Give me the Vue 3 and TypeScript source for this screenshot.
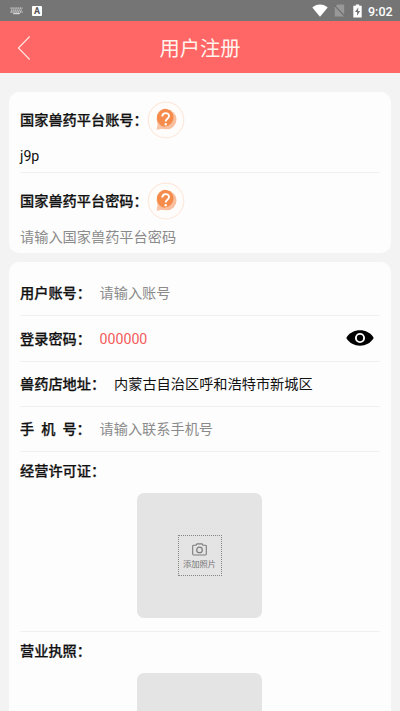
<script setup lang="ts">
import { ref } from 'vue'

interface PlatformField {
  label: string
  value: string
  placeholder: string
}

interface Upload {
  label: string
  prompt: string
}

const platformFields: PlatformField[] = [
  { label: '国家兽药平台账号：', value: 'j9p', placeholder: '' },
  { label: '国家兽药平台密码：', value: '', placeholder: '请输入国家兽药平台密码' },
]

const uploads: Upload[] = [
  { label: '经营许可证：', prompt: '添加照片' },
  { label: '营业执照：', prompt: '' },
]

const password = ref('000000')
const masked = ref(false)
</script>

<template>
  <div class="screen">
    <div class="status">
      <svg class="keyboard" viewBox="0 0 13 8">
        <path d="M0.5 1.2h12M1 3.1h11M0.5 5h12" stroke="#d2d2d2" stroke-width="1.3" stroke-dasharray="1.3 0.6" />
        <path d="M3.2 6.6h6.6" stroke="#d8d8d8" stroke-width="1.2" />
      </svg>
      <span class="ime">A</span>
      <svg class="wifi" viewBox="0 0 16 13">
        <path d="M0.3 3.4C4.5-.5 11.5-.5 15.7 3.4L8 12.8z" fill="#fff" />
      </svg>
      <svg class="sim" viewBox="0 0 11 13">
        <path d="M3.4 0.5H10.2V12.5H0.8V3.2z" fill="#989898" />
        <path d="M0.3 1.3L10.6 12" stroke="#6e6e6e" stroke-width="1.2" />
      </svg>
      <svg class="battery" viewBox="0 0 9 14">
        <path d="M2.8 0.4h3.4v1.3h2.5v11.8H0.3V1.7h2.5z" fill="#fff" />
        <path d="M5.4 3.3L2 8h2.1v3.7L7.1 7H5z" fill="#747474" />
      </svg>
      <span class="clock">9:02</span>
    </div>

    <header class="header">
      <svg class="back" viewBox="0 0 14 26">
        <path d="M12.7 1.5L1.4 13L12.7 24.5" fill="none" stroke="#ffe3df" stroke-width="1.2" />
      </svg>
      <h1 class="title">用户注册</h1>
    </header>

    <main class="content">
      <section class="card platform">
        <div v-for="field in platformFields" :key="field.label" class="platform-field">
          <div class="platform-head">
            <span class="label">{{ field.label }}</span>
            <svg class="help" viewBox="0 0 38 38">
              <circle cx="19" cy="19" r="17.8" fill="#fffdfc" stroke="#fde9dd" stroke-width="1.2" />
              <path d="M11 21L9.6 28.8L17 27.4z" fill="#f9c4a6" />
              <circle cx="19.6" cy="18.4" r="9.9" fill="#f9bf9e" />
              <path d="M17.6 7.8a9.5 9.5 0 0 1 8.6 6c1.4 5.5-2 10.8-8.6 12A9.1 9.1 0 0 1 17.6 7.8z" fill="#f58c4b" />
              <path d="M15.3 15.6c0-4.6 6.7-4.4 6.7-.6 0 2.8-3.3 2.8-3.3 5.6" fill="none" stroke="#fff" stroke-width="1.9" />
              <circle cx="18.7" cy="23.3" r="1.2" fill="#fff" />
            </svg>
          </div>
          <div class="platform-input" :class="{ hint: !field.value }">
            {{ field.value || field.placeholder }}
          </div>
        </div>
      </section>

      <section class="card account">
        <div class="row">
          <span class="label short">用户账号：</span>
          <span class="hint">请输入账号</span>
        </div>
        <div class="row">
          <span class="label short">登录密码：</span>
          <span class="password">{{ masked ? '••••••' : password }}</span>
          <svg class="eye" viewBox="0 0 28 18" @click="masked = !masked">
            <path d="M0.3 9C6-1.2 22-1.2 27.7 9C22 19.2 6 19.2 0.3 9z" fill="#000" />
            <circle cx="14" cy="9" r="4.1" fill="#000" stroke="#fff" stroke-width="1.9" />
          </svg>
        </div>
        <div class="row">
          <span class="label address">兽药店地址：</span>
          <span>内蒙古自治区呼和浩特市新城区</span>
        </div>
        <div class="row">
          <span class="label short phone"><i>手</i><i>机</i><i>号：</i></span>
          <span class="hint">请输入联系手机号</span>
        </div>
        <div v-for="item in uploads" :key="item.label" class="upload">
          <span class="label">{{ item.label }}</span>
          <div class="photo">
            <div v-if="item.prompt" class="add">
              <svg class="camera" viewBox="0 0 15 13">
                <path d="M1.6 2.2H4L5 .9h5l1 1.3h2.4q.9 0 .9.9v8q0 .9-.9.9H1.6q-.9 0-.9-.9v-8q0-.9.9-.9z" fill="none" stroke="#7c7c7c" stroke-width="1.1" />
                <circle cx="7.5" cy="6.9" r="2.8" fill="none" stroke="#7c7c7c" stroke-width="1.2" />
              </svg>
              <span>{{ item.prompt }}</span>
            </div>
          </div>
        </div>
      </section>
    </main>
  </div>
</template>

<style>
body {
  margin: 0;
  overflow: hidden;
}
</style>

<style scoped>
.screen {
  box-sizing: border-box;
  height: 711px;
  overflow: hidden;
  background: #f3f3f3;
  color: #111;
  font: 14.2px/20px Roboto, "Noto Sans CJK SC", sans-serif;
}

.screen * {
  box-sizing: border-box;
}

svg {
  display: block;
  flex: none;
}

.status {
  display: flex;
  align-items: center;
  height: 21px;
  padding: 0 7px 0 10px;
  background: #757575;
}

.keyboard {
  width: 13px;
  height: 8px;
}

.ime {
  width: 10px;
  height: 10px;
  margin-left: 9px;
  border-radius: 1px;
  background: #fff;
  color: #555;
  font-size: 9px;
  font-weight: 700;
  line-height: 11px;
  text-align: center;
}

.wifi {
  width: 16px;
  height: 13px;
  margin-left: auto;
}

.sim {
  width: 11px;
  height: 13px;
  margin-left: 6px;
}

.battery {
  width: 9px;
  height: 14px;
  margin-left: 8px;
}

.clock {
  width: 25px;
  margin-left: 6px;
  padding-top: 2px;
  color: #fff;
  font-size: 12.5px;
  font-weight: 500;
  white-space: nowrap;
}

.header {
  display: grid;
  grid-template-columns: 60px 1fr 60px;
  align-items: center;
  height: 52px;
  background: #ff6666;
}

.back {
  width: 14px;
  height: 26px;
  margin-top: 1px;
  margin-left: 17px;
}

.title {
  margin: 0;
  padding-top: 4px;
  color: #fff3ec;
  font-size: 20.3px;
  font-weight: 400;
  line-height: 28px;
  text-align: center;
}

.content {
  display: flex;
  flex-direction: column;
  gap: 9px;
  padding: 19px 9px 0;
}

.card {
  border-radius: 10px;
  background: #fdfdfd;
  padding: 0 11px;
}

.platform {
  height: 161px;
}

.platform-field {
  height: 81px;
  padding-top: 9px;
  border-bottom: 1px solid #f0f0f0;
}

.platform-field:last-child {
  border-bottom: 0;
}

.platform-head {
  display: flex;
  align-items: center;
  height: 38px;
}

.help {
  width: 38px;
  height: 38px;
  margin-top: -1px;
  margin-left: -0.5px;
}

.platform-input {
  margin-top: 7px;
}

.label {
  flex: none;
  font-weight: 500;
  -webkit-text-stroke: 0.25px currentColor;
  white-space: nowrap;
}

.hint {
  color: #8b8b8b;
}

.account {
  padding-top: 9px;
}

.row {
  display: flex;
  align-items: center;
  height: 45.3px;
  padding-top: 0.4px;
  border-bottom: 1px solid #f0f0f0;
}

.short {
  width: 79.5px;
}

.address {
  width: 94px;
}

.phone {
  display: flex;
  gap: 7px;
}

.phone i {
  font-style: normal;
}

.password {
  color: #f45b5b;
}

.eye {
  width: 28px;
  height: 18px;
  margin-top: -1px;
  margin-left: auto;
  margin-right: 6px;
}

.upload {
  display: flex;
  flex-direction: column;
  height: 180px;
  padding-top: 9px;
  border-bottom: 1px solid #f0f0f0;
}

.photo {
  display: grid;
  place-items: center;
  align-self: center;
  width: 125px;
  height: 125px;
  margin-top: 12px;
  margin-right: 1px;
  border-radius: 7px;
  background: #e4e4e4;
  flex: none;
}

.add {
  display: flex;
  flex-direction: column;
  align-items: center;
  width: 44px;
  height: 41px;
  padding-top: 7px;
  border: 1px dotted #858585;
  color: #777;
  font-size: 8.3px;
  line-height: 12px;
  white-space: nowrap;
}

.camera {
  width: 15px;
  height: 13px;
  margin-bottom: 2px;
}
</style>
